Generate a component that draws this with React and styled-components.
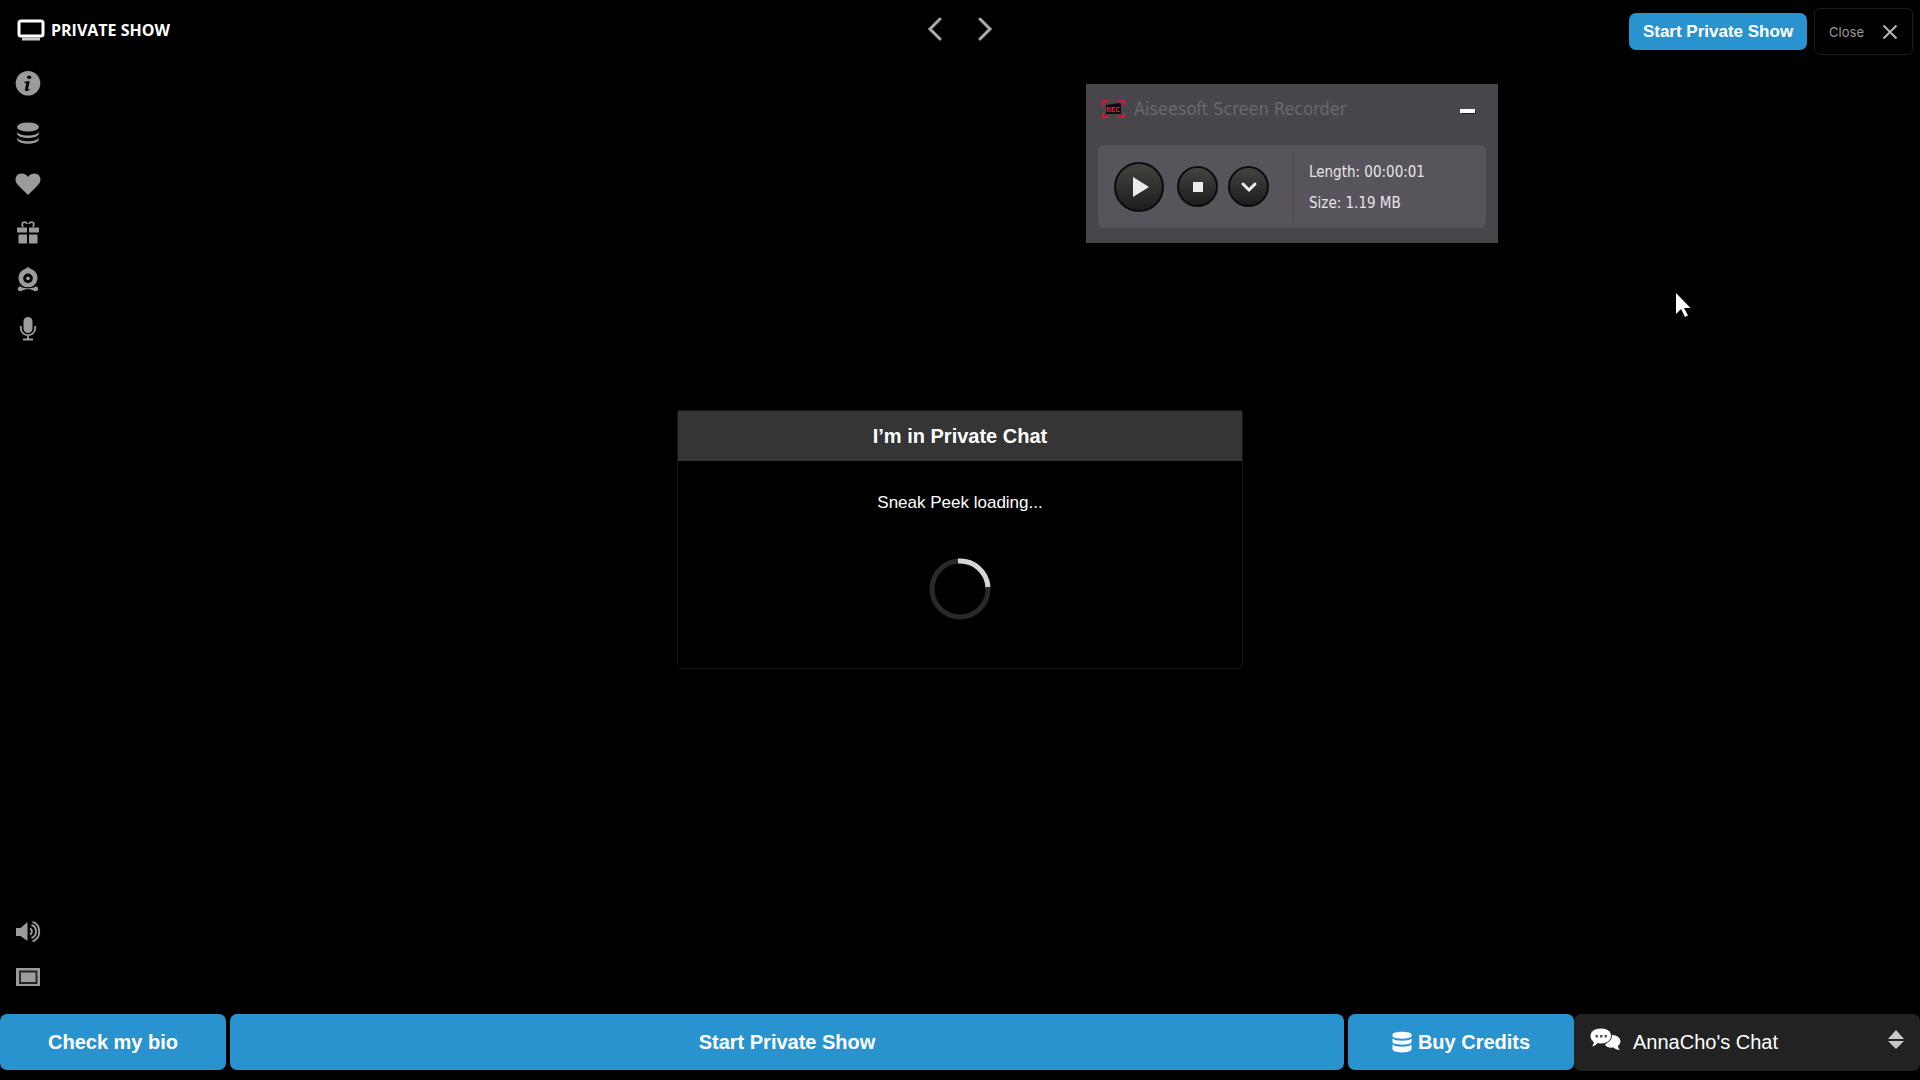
import * as React from "react";
import styled, { createGlobalStyle, css, keyframes } from "styled-components";

const Colors = {
	blue: "#2993cf",
	icon: "#9b9b9b",
	panel: "#222222",
	windowBg: "#48464b",
	windowPanel: "#58545c",
};

const GlobalStyle = createGlobalStyle`
	* {
		box-sizing: border-box;
	}

	body {
		margin: 0;
		background: #000000;
		color: #ffffff;
		font-family: "Liberation Sans", Arial, sans-serif;
	}

	button {
		font-family: inherit;
		margin: 0;
		padding: 0;
		border: 0;
		background: none;
		color: inherit;
		cursor: pointer;
	}

	svg {
		display: block;
		flex-shrink: 0;
	}
`;

const Page = styled.div`
	display: flex;
	flex-direction: column;
	min-height: 100vh;
	padding-bottom: 9px;
`;

const Header = styled.header`
	display: grid;
	grid-template-columns: 1fr auto 1fr;
	align-items: start;
	padding: 8px 7px 10px 16px;
`;

const Title = styled.h1`
	display: flex;
	align-items: center;
	gap: 6px;
	margin: 0;
	padding-top: 8px;
	font-family: "Open Sans", "Noto Sans", sans-serif;
	font-size: 16px;
	line-height: 28px;
	font-weight: 700;
`;

const Nav = styled.nav`
	display: flex;
	gap: 24px;
	padding: 7px 9px 0 0;
`;

const HeaderActions = styled.div`
	display: flex;
	align-items: center;
	justify-content: flex-end;
	gap: 7px;
`;

const filled = css`
	background: ${Colors.blue};
	border-radius: 7px;
	font-weight: 700;
`;

const ShowButton = styled.button`
	${filled}
	height: 37px;
	padding: 0 14px;
	font-size: 17px;
`;

const CloseButton = styled.button`
	display: flex;
	align-items: center;
	gap: 18px;
	height: 47px;
	padding: 0 14px;
	border: 1px solid #1d1d1d;
	border-radius: 6px;
	color: ${Colors.icon};
	font-family: Inter, sans-serif;
	font-size: 13px;
`;

const Main = styled.main`
	flex: 1;
	display: grid;
	grid-template-columns: 1fr auto 1fr;
`;

const Sidebar = styled.aside`
	display: flex;
	flex-direction: column;
	justify-content: space-between;
	padding: 6px 15px 24px;
`;

const IconGroup = styled.div`
	display: flex;
	flex-direction: column;
	align-items: flex-start;
	gap: ${({ $gap }) => $gap}px;
	color: ${Colors.icon};
`;

const Dialog = styled.section`
	align-self: center;
	width: 566px;
	max-width: 100%;
	min-height: 259px;
	border: 1px solid #161616;
	border-radius: 2px 2px 6px 6px;
	overflow: hidden;
	text-align: center;
`;

const DialogTitle = styled.h2`
	margin: 0;
	background: #353535;
	font-size: 20px;
	line-height: 50px;
	font-weight: 700;
`;

const DialogText = styled.p`
	margin: 32px 0 45px;
	font-size: 17px;
	line-height: 20px;
`;

const spin = keyframes`
	from {
		transform: rotate(0deg);
	}

	to {
		transform: rotate(360deg);
	}
`;

const Spinner = styled.svg`
	margin: 0 auto;
	animation: ${spin} 1s linear infinite paused;
`;

const Footer = styled.footer`
	display: grid;
	grid-template-columns: 226px 1fr 226px 342px;
	column-gap: 4px;
	align-items: start;
`;

const FooterButton = styled.button`
	${filled}
	display: flex;
	align-items: center;
	justify-content: center;
	gap: 6px;
	height: 56px;
	font-size: 20px;
`;

const ChatButton = styled.button`
	display: flex;
	align-items: center;
	gap: 12px;
	height: 57px;
	margin-left: -4px;
	padding: 0 16px;
	background: ${Colors.panel};
	border-radius: 7px;
	font-size: 20px;
`;

const ChatName = styled.span`
	flex: 1;
	text-align: left;
`;

const RecorderWindow = styled.section`
	position: absolute;
	top: 84px;
	right: 422px;
	width: 412px;
	padding: 0 12px 15px;
	background: ${Colors.windowBg};
	font-family: "DejaVu Sans Condensed", "Noto Sans", sans-serif;
`;

const RecorderBar = styled.div`
	display: flex;
	align-items: center;
	gap: 9px;
	height: 61px;
	padding: 0 10px 12px 4px;
`;

const RecorderTitle = styled.h2`
	flex: 1;
	margin: 0;
	color: #6b696f;
	font-size: 18px;
	line-height: 24px;
	font-weight: 400;
`;

const RecorderPanel = styled.div`
	display: flex;
	align-items: center;
	height: 83px;
	padding: 0 16px;
	background: ${Colors.windowPanel};
	border-radius: 6px;
`;

const RoundButtons = styled.div`
	display: flex;
	align-items: center;
	gap: 10px;
`;

const RoundButton = styled.button`
	display: flex;
	align-items: center;
	justify-content: center;
	width: ${({ $size }) => $size}px;
	height: ${({ $size }) => $size}px;
	border: 2px solid #0c0c0e;
	border-radius: 50%;
	background: linear-gradient(#454340, #1d1d1c);

	&:first-child {
		margin-right: 3px;
	}
`;

const RecorderStats = styled.div`
	height: 70px;
	margin-left: 24px;
	padding: 5px 0 0 15px;
	border-left: 1px solid #4a474e;
	color: #e6e4e8;
	font-size: 15px;
	line-height: 31px;
	white-space: nowrap;
`;

const Cursor = styled.svg`
	position: absolute;
	top: 292px;
	right: 228px;
	pointer-events: none;
`;

const Icon = ({ width = 26, height = 26, children }) => (
	<svg
		width={width}
		height={height}
		viewBox={`0 0 ${width} ${height}`}
		fill="currentColor"
		aria-hidden="true"
	>
		{children}
	</svg>
);

const MonitorIcon = () => (
	<Icon width={29} height={24}>
		<rect x="3" y="3" width="24" height="15" rx="2" fill="none" stroke="#fff" strokeWidth="3" />
		<path d="M6 19.500h18v3H6z" fill="#ccc" />
	</Icon>
);

const ChevronIcon = ({ points }) => (
	<Icon width={26} height={27}>
		<polyline points={points} fill="none" stroke="#aaa" strokeWidth="3" strokeLinecap="round" />
	</Icon>
);

const CoinsIcon = () => (
	<Icon>
		<ellipse cx="13" cy="7" rx="11" ry="4.500" />
		<path d="M2 11.700c2 5 20 5 22 0v1.800c-1 6-21 6-22 0z" />
		<path d="M2 17.500c2 5 20 5 22 0v1.800c-1 6-21 6-22 0z" />
	</Icon>
);

const StackIcon = () => (
	<Icon width={20} height={22}>
		<path d="M0.500 3.500C0.500-.300 19.500-.300 19.500 3.500V5c0 3.500-19 3.500-19 0z" />
		<path d="M0.500 7.500c3 3 16 3 19 0v3.500c0 3.500-19 3.500-19 0z" />
		<path d="M0.500 13.500c3 3 16 3 19 0V18c0 4.500-19 4.500-19 0z" />
	</Icon>
);

const TOOLS = [
	{
		label: "Info",
		icon: (
			<Icon>
				<circle cx="13" cy="12.300" r="12.300" />
				<ellipse cx="14.200" cy="6.300" rx="2.100" ry="1.700" fill="#000" />
				<path
					d="M9.500 10.700l5.300-.700-1.800 7.700c-.1.700.5.700 1.800 0l-.3 1.300c-2.200 1.500-5 1.500-4.500-.8l1.300-6-1.900-.2z"
					fill="#000"
				/>
			</Icon>
		),
	},
	{ label: "Credits", icon: <CoinsIcon /> },
	{
		label: "Favorite",
		icon: (
			<Icon>
				<path d="M13 26L2.500 15.500C-1.500 11 1 4.500 6.500 4.500c3 0 5.200 1.500 6.500 3.500 1.300-2 3.500-3.500 6.500-3.500 5.500 0 8 6.500 4 11z" />
			</Icon>
		),
	},
	{
		label: "Gifts",
		icon: (
			<Icon>
				<path d="M2 9.500h10v5H2zM14 9.500h10v5H14zM3.500 16.500H12v9H3.500zM14 16.500h8.500v9H14z" />
				<path
					d="M8 9C5 3 11 3.500 12 6M18 9c3-6-3-5.500-4-3"
					fill="none"
					stroke="currentColor"
					strokeWidth="1.800"
				/>
			</Icon>
		),
	},
	{
		label: "Webcam",
		icon: (
			<Icon>
				<path d="M13 0l3 2a9.500 9.500 0 1 1-6 0z" />
				<circle cx="13" cy="11.300" r="4.800" fill="#000" />
				<circle cx="13" cy="11.300" r="1.900" />
				<path
					d="M5 18.700c3 2.800 13 2.800 16 0 3.500 1.500 3.500 5.500 0 6-2.500 0-3-2-8-2s-5.500 2-8 2c-3.500-.5-3.500-4.500 0-6z"
					stroke="#000"
				/>
			</Icon>
		),
	},
	{
		label: "Microphone",
		icon: (
			<Icon>
				<rect x="8.500" y="1" width="9" height="16" rx="4.500" />
				<path
					d="M5.800 10v2c0 9.500 14.400 9.500 14.400 0v-2M13 19v4M8 23.500h10"
					fill="none"
					stroke="currentColor"
					strokeWidth="1.900"
				/>
			</Icon>
		),
	},
];

const VIEW_TOOLS = [
	{
		label: "Volume",
		icon: (
			<Icon>
				<path d="M1 9h4.500L12.500 3v19L5.500 17H1z" />
				<path
					d="M15 9.500c2.500 1 2.500 5 0 6M16.500 6c6 2 6 11 0 13M17.500 2.800c9 3 9 16.500 0 19.500"
					fill="none"
					stroke="currentColor"
					strokeWidth="1.900"
				/>
			</Icon>
		),
	},
	{
		label: "Full screen",
		icon: (
			<Icon>
				<path d="M1 4h24v18H1z" />
				<path d="M5 7.500h16.500v11.500H5z" fill="none" stroke="#222" strokeWidth="1.800" />
			</Icon>
		),
	},
];

const ToolButtons = ({ tools, gap }) => (
	<IconGroup $gap={gap}>
		{tools.map(({ label, icon }) => (
			<button type="button" key={label} aria-label={label}>
				{icon}
			</button>
		))}
	</IconGroup>
);

const ScreenRecorder = () => (
	<RecorderWindow>
		<RecorderBar>
			<Icon width={23} height={18}>
				<path
					d="M1 5V1h6M16 1h6v4M1 13v4h6M16 17h6v-4"
					fill="none"
					stroke="#d3192f"
					strokeWidth="2"
				/>
				<path d="M4 5l13-2 2 1v10H4z" fill="#17090b" />
				<text x="4" y="12" fill="#e01c35" fontSize="7" fontWeight="700">
					REC
				</text>
			</Icon>
			<RecorderTitle>Aiseesoft Screen Recorder</RecorderTitle>
			<button type="button" aria-label="Minimize">
				<Icon width={16} height={10}>
					<path d="M2 6h14v4H2z" fill="#222" />
					<path d="M0 5h15v4H0z" fill="#fff" />
				</Icon>
			</button>
		</RecorderBar>
		<RecorderPanel>
			<RoundButtons>
				<RoundButton type="button" $size={50} aria-label="Play">
					<Icon width={20} height={22}>
						<path d="M4 1l16 10L4 21z" fill="#ececec" />
					</Icon>
				</RoundButton>
				<RoundButton type="button" $size={41} aria-label="Stop">
					<Icon width={10} height={10}>
						<path d="M0 0h10v10H0z" fill="#ececec" />
					</Icon>
				</RoundButton>
				<RoundButton type="button" $size={41} aria-label="More">
					<Icon width={18} height={12}>
						<polyline
							points="3,3 9,9 15,3"
							fill="none"
							stroke="#f2f2f2"
							strokeWidth="3"
							strokeLinecap="round"
						/>
					</Icon>
				</RoundButton>
			</RoundButtons>
			<RecorderStats>
				<div>Length: 00:00:01</div>
				<div>Size: 1.19 MB</div>
			</RecorderStats>
		</RecorderPanel>
	</RecorderWindow>
);

const App = () => (
	<>
		<GlobalStyle />
		<Page>
			<Header>
				<Title>
					<MonitorIcon />
					PRIVATE SHOW
				</Title>
				<Nav>
					<button type="button" aria-label="Previous">
						<ChevronIcon points="18,4 8,14 18,24" />
					</button>
					<button type="button" aria-label="Next">
						<ChevronIcon points="8,4 18,14 8,24" />
					</button>
				</Nav>
				<HeaderActions>
					<ShowButton type="button">Start Private Show</ShowButton>
					<CloseButton type="button">
						Close
						<Icon width={16} height={16}>
							<path
								d="M1.500 1.500l13 13M14.500 1.500l-13 13"
								stroke="#b5b5b5"
								strokeWidth="2"
							/>
						</Icon>
					</CloseButton>
				</HeaderActions>
			</Header>

			<Main>
				<Sidebar>
					<ToolButtons tools={TOOLS} gap={23} />
					<ToolButtons tools={VIEW_TOOLS} gap={19} />
				</Sidebar>
				<Dialog>
					<DialogTitle>I’m in Private Chat</DialogTitle>
					<DialogText>Sneak Peek loading...</DialogText>
					<Spinner width="62" height="62" viewBox="0 0 62 62" fill="none">
						<circle cx="31" cy="31" r="28" stroke="#2a2a2a" strokeWidth="5" />
						<path d="M29 3a28 28 0 0 1 30 26" stroke="#d6d6d6" strokeWidth="5" />
					</Spinner>
				</Dialog>
			</Main>

			<Footer>
				<FooterButton type="button">Check my bio</FooterButton>
				<FooterButton type="button">Start Private Show</FooterButton>
				<FooterButton type="button">
					<StackIcon />
					Buy Credits
				</FooterButton>
				<ChatButton type="button">
					<Icon width={31} height={32}>
						<path d="M22 8c8 0 11 7 6 11 0 2 1 3 2 4-3 0-5-1-6.500-2.500-4 .5-7-.5-8.500-2.500z" />
						<path
							d="M11 1c14 0 14 15.500 0 16-1.500 0-2.500-.2-3.500-.5C6 18.500 4 20 1 20c1.500-1.500 2.300-3 2.300-5C-3 10 0 1 11 1z"
							stroke="#222"
							strokeWidth="1"
						/>
						<path d="M5.500 8h2.500v2.500H5.500zM10 8h2.500v2.500H10zM14.500 8H17v2.500h-2.500z" fill="#555" />
					</Icon>
					<ChatName>AnnaCho's Chat</ChatName>
					<Icon width={16} height={26}>
						<path d="M8 0l8 9H0zM0 11h16l-8 8z" fill="#c8c8c8" />
					</Icon>
				</ChatButton>
			</Footer>
		</Page>
		<ScreenRecorder />
		<Cursor width="18" height="28" viewBox="0 0 18 28">
			<path d="M2 1v21l5-5 4 8 3-1.500-4-7.500h6.500z" fill="#fff" />
		</Cursor>
	</>
);

export default App;
